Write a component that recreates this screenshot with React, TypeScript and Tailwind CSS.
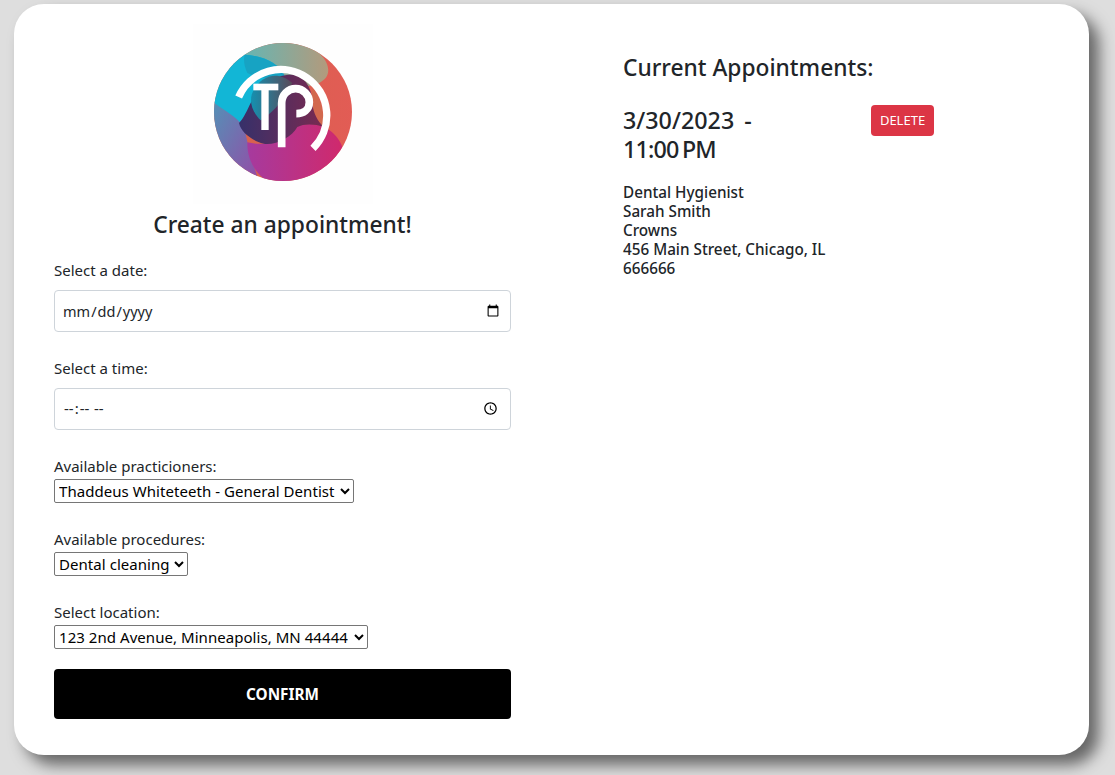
function Logo() {
  return (
    <div className="flex h-[180px] w-[180px] items-center justify-center bg-[#fefefe]">
      <svg viewBox="37 13 540 540" className="h-[180px] w-[180px]">
        <defs>
          <clipPath id="disc">
            <circle cx="307" cy="277" r="207" />
          </clipPath>
          <linearGradient id="top" x1="0" x2="1" y1="0" y2="0">
            <stop offset="0" stopColor="#5fb8b8" />
            <stop offset="1" stopColor="#b39a7c" />
          </linearGradient>
          <linearGradient id="low" x1="0" x2="1" y1="0" y2="1">
            <stop offset="0" stopColor="#4f96b8" />
            <stop offset="1" stopColor="#9a45a5" />
          </linearGradient>
          <linearGradient id="mag" x1="0" x2="1" y1="0" y2="0">
            <stop offset="0" stopColor="#a63a9e" />
            <stop offset="1" stopColor="#d0296c" />
          </linearGradient>
          <linearGradient id="dark" x1="0" x2="1" y1="0" y2="0">
            <stop offset="0" stopColor="#36306a" />
            <stop offset="1" stopColor="#7a2a50" />
          </linearGradient>
          <linearGradient id="mid" x1="0" x2="1" y1="0" y2="0">
            <stop offset="0" stopColor="#1590b0" />
            <stop offset="1" stopColor="#5a4a58" />
          </linearGradient>
          <linearGradient id="red" x1="0" x2="1" y1="0" y2="0">
            <stop offset="0" stopColor="#d4644c" />
            <stop offset="1" stopColor="#e25c55" />
          </linearGradient>
        </defs>
        <g clipPath="url(#disc)">
          <rect x="90" y="60" width="430" height="430" fill="url(#red)" />
          <path d="M170 60H420V105C445 130 450 160 432 178C415 195 400 195 380 200C320 190 250 150 190 110Z" fill="url(#top)" />
          <path d="M90 230C130 260 165 285 185 300C195 340 205 400 240 500H90Z" fill="url(#low)" />
          <path d="M200 368C270 385 330 350 350 320C400 300 465 325 485 382C470 440 380 500 300 500C240 490 198 430 200 368Z" fill="url(#mag)" />
          <path d="M195 105C250 110 295 130 310 170C270 190 225 215 210 255C200 275 190 295 178 308C150 280 110 260 90 240V170C120 130 160 105 195 105Z" fill="#12b6d6" />
          <path d="M192 105C245 108 295 130 312 168C280 178 240 180 200 160C190 140 188 120 192 105Z" fill="#17a3c3" />
          <path d="M210 250C240 195 290 160 345 165C378 178 395 210 395 250C400 280 415 305 430 322C400 312 370 312 350 322C330 358 270 385 235 368C205 355 180 335 175 310C190 295 200 270 210 250Z" fill="url(#dark)" />
          <path d="M213 225C230 175 285 145 335 190C318 225 285 275 240 302C222 285 205 255 213 225Z" fill="url(#mid)" />
          <path d="M395 205C415 225 430 270 430 322C410 305 398 280 395 250C393 235 393 220 395 205Z" fill="#d2694e" />
        </g>
        <path d="M174 232A138 138 0 1 1 397 386" fill="none" stroke="#fff" strokeWidth="22" />
        <rect x="218" y="192" width="75" height="20" fill="#fff" />
        <rect x="242" y="205" width="22" height="126" fill="#fff" />
        <path d="M303 383V250C303 225 322 207 345 207C368 207 386 226 386 248C386 270 368 282 347 282" fill="none" stroke="#fff" strokeWidth="23" />
      </svg>
    </div>
  )
}

function Label({ children }: { children: string }) {
  return <label className="block h-6 leading-[22px]">{children}</label>
}

export default function App() {
  return (
    <div className="h-[775px] w-[1115px] overflow-hidden bg-[#dedede] px-[14px] pt-1 font-['Noto_Sans',sans-serif] text-[15px] text-[#212529]">
      <div className="flex h-[751px] w-[1075px] rounded-[30px] bg-white pl-10 shadow-[10px_10px_15px_#666]">
        <div className="w-[457px]">
          <div className="flex justify-center pt-[20px]">
            <Logo />
          </div>
          <h2 className="mt-[3px] h-[36px] text-center text-[22.75px] leading-[36px] font-medium">
            Create an appointment!
          </h2>
          <div className="mt-[16px]">
            <Label>Select a date:</Label>
          </div>
          <input
            type="date"
            className="mt-[7px] block h-[42px] w-full rounded border border-[#ced4da] pt-[1px] pr-2 pl-[7px] text-[14.5px]"
          />
          <div className="mt-[25px]">
            <Label>Select a time:</Label>
          </div>
          <input
            type="time"
            className="mt-[7px] block h-[42px] w-full rounded border border-[#ced4da] px-2 pb-[1px] text-[15px] [&::-webkit-datetime-edit-fields-wrapper]:tracking-[0.8px] [&::-webkit-datetime-edit-text]:tracking-[1px]"
          />
          <div className="mt-[25px]">
            <Label>Available practicioners:</Label>
          </div>
          <select className="block h-6 rounded-[2px] border border-[#767676] bg-white pr-[2px] pl-0 text-[15px] tracking-[0.05px] text-black">
            <option>Thaddeus Whiteteeth - General Dentist</option>
          </select>
          <div className="mt-[25px]">
            <Label>Available procedures:</Label>
          </div>
          <select className="block h-6 rounded-[2px] border border-[#767676] bg-white pr-[1px] pl-0 text-[15px] tracking-[0.05px] text-black">
            <option>Dental cleaning</option>
          </select>
          <div className="mt-[25px]">
            <Label>Select location:</Label>
          </div>
          <select className="block h-6 rounded-[2px] border border-[#767676] bg-white pr-[3px] pl-0 text-[15px] tracking-[0.05px] text-black">
            <option>123 2nd Avenue, Minneapolis, MN 44444</option>
          </select>
          <button className="mt-5 h-[50px] w-full rounded bg-black text-[15.3px] font-bold text-white">
            CONFIRM
          </button>
        </div>
        <div className="ml-[112px] pt-[47px]">
          <h2 className="h-[34px] text-[22.75px] leading-[34px] font-medium">Current Appointments:</h2>
          <div className="mt-[20px] flex w-[311px] items-start justify-between">
            <h3 className="w-[160px] pt-[1px] text-[23.3px] leading-[29px] font-medium">
              <span className="block [word-spacing:4px]">3/30/2023 -</span>
              <span className="block tracking-[-0.8px] [word-spacing:-2px]">11:00 PM</span>
            </h3>
            <button className="h-[31px] w-[63px] rounded-[4px] bg-[#dc3545] text-[13px] text-white">
              DELETE
            </button>
          </div>
          <div className="mt-[19px] text-[15.25px] leading-[19px] font-medium">
            <p>Dental Hygienist</p>
            <p>Sarah Smith</p>
            <p>Crowns</p>
            <p>456 Main Street, Chicago, IL</p>
            <p>666666</p>
          </div>
        </div>
      </div>
    </div>
  )
}
